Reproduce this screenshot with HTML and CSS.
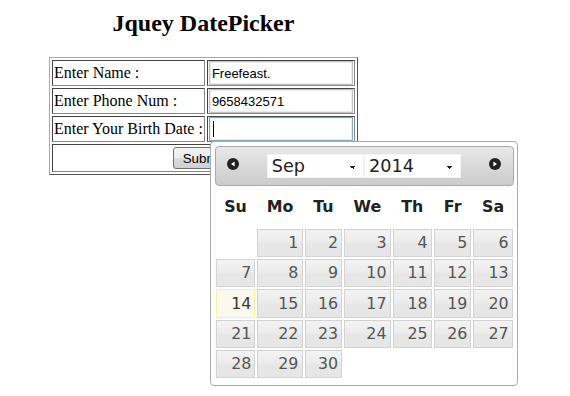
FILE: index.html
```html
<!DOCTYPE html>
<html lang="en">
<head>
  <meta charset="UTF-8">
  <title>Jquey DatePicker</title>
<link rel="stylesheet" href="styles.css">
</head>
<body>
<div class="formWrapper">
    <h2>Jquey DatePicker</h2>
    <table class="formTable">
        <tr>
            <td class="label">Enter Name :</td>
            <td><input class="field" type="text" value="Freefeast."></td>
        </tr>
        <tr>
            <td class="label">Enter Phone Num :</td>
            <td><input class="field" type="text" value="9658432571"></td>
        </tr>
        <tr>
            <td class="label">Enter Your Birth Date :</td>
            <td><span class="caretWrap"><input class="field focused" type="text" value=""></span></td>
        </tr>
        <tr>
            <td colspan="2" class="text-center"><input class="submitBtn" type="submit" value="Submit"></td>
        </tr>
    </table>
</div>

<!-- datepicker popup, shown under the birth date field -->
<div class="datepicker">
    <div class="dp-header">
        <a class="dp-prev" title="Prev">
            <svg width="16" height="16" viewBox="0 0 16 16"><circle cx="8" cy="8" r="6" fill="#222"/><polygon points="6,8 9.6,5.4 9.6,10.6" fill="#fff"/></svg>
        </a>
        <a class="dp-next" title="Next">
            <svg width="16" height="16" viewBox="0 0 16 16"><circle cx="8" cy="8" r="6" fill="#222"/><polygon points="10,8 6.4,5.4 6.4,10.6" fill="#fff"/></svg>
        </a>
        <div class="dp-title"><select class="dp-select"><option>Sep</option></select><select class="dp-select"><option>2014</option></select></div>
    </div>
    <table class="dp-calendar">
        <thead>
            <tr><th>Su</th><th>Mo</th><th>Tu</th><th>We</th><th>Th</th><th>Fr</th><th>Sa</th></tr>
        </thead>
        <tbody>
            <tr><td>&nbsp;</td><td><a class="dp-day" href="#">1</a></td><td><a class="dp-day" href="#">2</a></td><td><a class="dp-day" href="#">3</a></td><td><a class="dp-day" href="#">4</a></td><td><a class="dp-day" href="#">5</a></td><td><a class="dp-day" href="#">6</a></td></tr>
            <tr><td><a class="dp-day" href="#">7</a></td><td><a class="dp-day" href="#">8</a></td><td><a class="dp-day" href="#">9</a></td><td><a class="dp-day" href="#">10</a></td><td><a class="dp-day" href="#">11</a></td><td><a class="dp-day" href="#">12</a></td><td><a class="dp-day" href="#">13</a></td></tr>
            <tr><td><a class="dp-day today" href="#">14</a></td><td><a class="dp-day" href="#">15</a></td><td><a class="dp-day" href="#">16</a></td><td><a class="dp-day" href="#">17</a></td><td><a class="dp-day" href="#">18</a></td><td><a class="dp-day" href="#">19</a></td><td><a class="dp-day" href="#">20</a></td></tr>
            <tr><td><a class="dp-day" href="#">21</a></td><td><a class="dp-day" href="#">22</a></td><td><a class="dp-day" href="#">23</a></td><td><a class="dp-day" href="#">24</a></td><td><a class="dp-day" href="#">25</a></td><td><a class="dp-day" href="#">26</a></td><td><a class="dp-day" href="#">27</a></td></tr>
            <tr><td><a class="dp-day" href="#">28</a></td><td><a class="dp-day" href="#">29</a></td><td><a class="dp-day" href="#">30</a></td><td>&nbsp;</td><td>&nbsp;</td><td>&nbsp;</td><td>&nbsp;</td></tr>
        </tbody>
    </table>
</div>
</body>
</html>
```

FILE: styles.css
```css
body {
    margin: 8px;
    font-family: 'Liberation Serif', serif;
    font-size: 16px;
    color: #000;
    background: #fff;
}
h2 {
    font-size: 24px;
    margin: 2px 0 20px;
    text-align: center;
}
.formWrapper {
    display: inline-block;
    margin-left: 41px;
}
.formTable {
    border: 1px solid;
    border-color: #a8a8a8 #555 #555 #a8a8a8;
    border-spacing: 2px;
}
.formTable td {
    border: 1px solid;
    border-color: #444 #888 #888 #444;
    padding: 0 1px;
    height: 24px;
}
.text-center {
    text-align: center;
}
.field {
    box-sizing: border-box;
    width: 144px;
    height: 24px;
    margin: 0;
    padding: 1px 2px;
    border: 1px solid #c2c2c2;
    box-shadow: inset 0 0 0 1px #ececec;
    font-family: 'Liberation Sans', sans-serif;
    font-size: 13px;
    color: #000;
    vertical-align: middle;
}
.field.focused {
    border-color: #87a8c4;
    box-shadow: inset 0 0 0 1px #e4eef6;
}
.caretWrap {
    position: relative;
    display: inline-block;
    vertical-align: middle;
}
.caretWrap::after {
    content: '';
    position: absolute;
    left: 4px;
    top: 4px;
    width: 1px;
    height: 16px;
    background: #000;
}
.submitBtn {
    height: 22px;
    margin: 2px 0;
    padding: 0 9px;
    border: 1px solid #707070;
    border-radius: 3px;
    background: linear-gradient(#f2f2f2, #ebebeb 50%, #dddddd 50%, #cfcfcf);
    font-family: 'Liberation Sans', sans-serif;
    font-size: 13.33px;
    color: #000;
}

/* datepicker (smoothness look) */
.datepicker {
    position: absolute;
    left: 210px;
    top: 141px;
    width: 17em;
    padding: .2em .2em 0;
    border: 1px solid #aaa;
    border-radius: 4px;
    background: #fff;
    color: #222;
    font-family: 'DejaVu Sans', Verdana, sans-serif;
    font-size: 17.6px;
}
.dp-header {
    position: relative;
    padding: .2em 0;
    border: 1px solid #aaa;
    border-radius: 4px;
    background: linear-gradient(#e9e9e9, #d9d9d9 50%, #cbcbcb);
    color: #222;
    font-weight: bold;
}
.dp-prev, .dp-next {
    position: absolute;
    top: 2px;
    width: 1.8em;
    height: 1.8em;
    display: flex;
    align-items: center;
    justify-content: center;
    cursor: pointer;
}
.dp-prev {
    left: 2px;
}
.dp-next {
    right: 2px;
}
.dp-title {
    margin: 0 2.3em;
    line-height: 1.8em;
    text-align: center;
}
.dp-select {
    -webkit-appearance: none;
    appearance: none;
    width: 45%;
    height: 24px;
    margin: 1px 0;
    padding: 0 0 0 4px;
    border: 1px solid #f4f4f4;
    border-radius: 0;
    background-color: #fff;
    background-image: linear-gradient(45deg, transparent 50%, #222 50%), linear-gradient(-45deg, transparent 50%, #222 50%);
    background-size: 3px 3px, 3px 3px;
    background-position: right 10px top 11px, right 7px top 11px;
    background-repeat: no-repeat;
    font-family: 'DejaVu Sans', Verdana, sans-serif;
    font-size: 1em;
    font-weight: normal;
    line-height: 22px;
    color: #222;
    vertical-align: middle;
}
.dp-calendar {
    width: 100%;
    font-size: .9em;
    line-height: 1.25;
    border-collapse: collapse;
    margin: 0 0 .4em;
}
.dp-calendar th {
    padding: .7em .3em;
    text-align: center;
    font-weight: bold;
    border: 0;
}
.dp-calendar td {
    border: 0;
    padding: 1px;
}
.dp-day {
    display: block;
    padding: .2em;
    text-align: right;
    text-decoration: none;
    border: 1px solid #d3d3d3;
    background: linear-gradient(#f3f3f3, #ececec 45%, #e6e6e6 55%, #e6e6e6);
    color: #555;
    font-weight: normal;
}
.dp-day.today {
    border-color: #fcefa1;
    background: #fbf9ee;
    color: #363636;
}
```
